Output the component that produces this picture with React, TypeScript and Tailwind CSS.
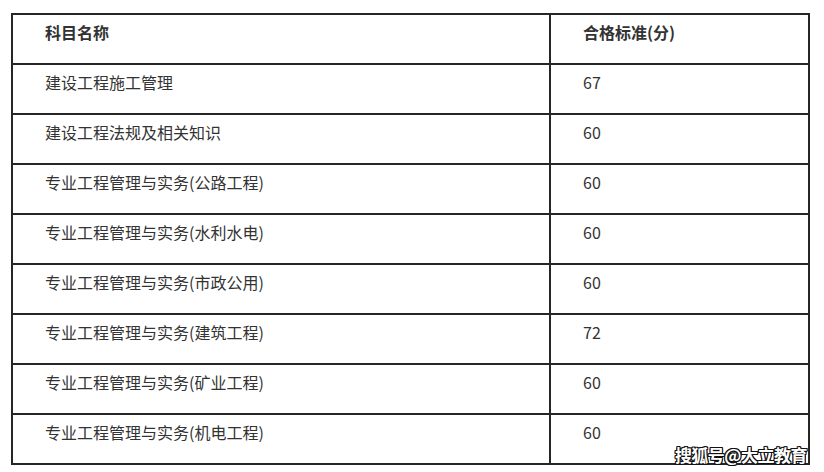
const rows = [
  ["建设工程施工管理", "67"],
  ["建设工程法规及相关知识", "60"],
  ["专业工程管理与实务(公路工程)", "60"],
  ["专业工程管理与实务(水利水电)", "60"],
  ["专业工程管理与实务(市政公用)", "60"],
  ["专业工程管理与实务(建筑工程)", "72"],
  ["专业工程管理与实务(矿业工程)", "60"],
  ["专业工程管理与实务(机电工程)", "60"],
];

function Row({ name, score, head }: { name: string; score: string; head?: boolean }) {
  return (
    <div
      className={`flex ${head ? "h-[48px] font-bold" : "h-[50px] border-t-2 border-[#262626]"}`}
    >
      <div className="w-[536px] pl-[32px] pt-[5px] leading-[24px]">{name}</div>
      <div className="w-[2px] bg-[#262626]" />
      <div className="flex-1 pl-[32px] pt-[5px] leading-[24px]">{score}</div>
    </div>
  );
}

export default function App() {
  return (
    <div
      className="w-[824px] h-[472px] bg-white pt-[13px] pl-[11px] text-[16px] text-[#333]"
      style={{ fontFamily: '"Noto Sans CJK SC", "Noto Sans", sans-serif' }}
    >
      <div className="relative w-[799px] border-2 border-[#262626]">
        <Row name="科目名称" score="合格标准(分)" head />
        {rows.map(([n, s]) => (
          <Row key={n} name={n} score={s} />
        ))}
        <div className="absolute right-[1px] bottom-[-3px] text-[17px] leading-[22px] font-bold text-white tracking-[-0.5px] [text-shadow:1px_0_0_#111,-1px_0_0_#111,0_1px_0_#111,0_-1px_0_#111,1px_1px_0_#111,-1px_-1px_0_#111,1px_-1px_0_#111,-1px_1px_0_#111]">
          搜狐号@大立教育
        </div>
      </div>
    </div>
  );
}
